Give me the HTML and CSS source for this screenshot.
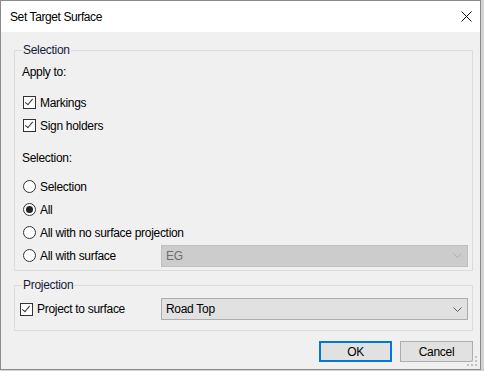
FILE: index.html
```html
<!DOCTYPE html>
<html>
<head>
    <link rel="stylesheet" href="styles.css">
</head>
<body>
    <div class="window">
        <div class="titlebar">
            <span class="title">Set Target Surface</span>
            <svg class="close-icon" width="11" height="11" viewBox="0 0 11 11">
                <path d="M0.5 0.5 L10.5 10.5 M10.5 0.5 L0.5 10.5" stroke="#111" stroke-width="1" fill="none"/>
            </svg>
        </div>
        <div class="content">
            <fieldset class="group">
                <legend>Selection</legend>
                <div class="text-line apply-label">Apply to:</div>
                <div class="check-row">
                    <span class="checkbox checked"></span>
                    <span>Markings</span>
                </div>
                <div class="check-row">
                    <span class="checkbox checked"></span>
                    <span>Sign holders</span>
                </div>
                <div class="text-line selection-label">Selection:</div>
                <div class="radio-row">
                    <div class="radio-label"><span class="radio"></span><span>Selection</span></div>
                </div>
                <div class="radio-row">
                    <div class="radio-label"><span class="radio selected"></span><span>All</span></div>
                </div>
                <div class="radio-row">
                    <div class="radio-label wide"><span class="radio"></span><span>All with no surface projection</span></div>
                </div>
                <div class="radio-row">
                    <div class="radio-label"><span class="radio"></span><span>All with surface</span></div>
                    <div class="combo disabled">
                        <span>EG</span>
                        <svg width="9" height="5" viewBox="0 0 9 5"><path d="M0.5 0.5 L4.5 4.5 L8.5 0.5" stroke="#b0b0b0" fill="none"/></svg>
                    </div>
                </div>
            </fieldset>
            <fieldset class="group projection">
                <legend>Projection</legend>
                <div class="project-row">
                    <div class="project-label">
                        <span class="checkbox checked"></span>
                        <span>Project to surface</span>
                    </div>
                    <div class="combo">
                        <span>Road Top</span>
                        <svg width="9" height="5" viewBox="0 0 9 5"><path d="M0.5 0.5 L4.5 4.5 L8.5 0.5" stroke="#606060" fill="none"/></svg>
                    </div>
                </div>
            </fieldset>
            <div class="buttons">
                <button class="btn default">OK</button>
                <button class="btn">Cancel</button>
            </div>
        </div>
        <svg class="grip" width="11" height="11" viewBox="0 0 11 11">
            <rect x="8" y="0" width="2" height="2" fill="#c2c2c2"/>
            <rect x="4" y="4" width="2" height="2" fill="#c2c2c2"/>
            <rect x="8" y="4" width="2" height="2" fill="#c2c2c2"/>
            <rect x="0" y="8" width="2" height="2" fill="#c2c2c2"/>
            <rect x="4" y="8" width="2" height="2" fill="#c2c2c2"/>
            <rect x="8" y="8" width="2" height="2" fill="#c2c2c2"/>
        </svg>
    </div>
</body>
</html>
```

FILE: styles.css
```css
body {
    margin: 0;
    background-color: #d4d4d4;
    font-family: "Liberation Sans", Arial, sans-serif;
    font-size: 12px;
    letter-spacing: -0.3px;
    color: #000;
}
.window {
    position: relative;
    width: 479px;
    height: 368px;
    border: 1px solid #8a8a8a;
    display: flex;
    flex-direction: column;
    background-color: #f0f0f0;
}
.titlebar {
    height: 31px;
    background-color: #fff;
    display: flex;
    align-items: center;
    justify-content: space-between;
    padding: 0 8px 0 9px;
}
.title {
    letter-spacing: -0.4px;
    padding-top: 1px;
}
.content {
    flex: 1;
    padding: 11px 7px 0 13px;
    display: flex;
    flex-direction: column;
}
.group {
    margin: 0;
    border: 1px solid #dcdcdc;
    padding: 0 4px 3px 8px;
    min-width: 0;
}
.group legend {
    padding: 0 1px;
    margin-left: -1px;
    line-height: 14px;
    color: #161a3a;
}
.text-line {
    line-height: 14px;
    margin-left: -1px;
}
.apply-label {
    margin-top: 8px;
    margin-bottom: 12px;
}
.selection-label {
    margin-top: 14px;
    margin-bottom: 10px;
}
.check-row {
    height: 23px;
    display: flex;
    align-items: center;
    gap: 4px;
}
.checkbox {
    width: 13px;
    height: 13px;
    box-sizing: border-box;
    border: 1px solid #333;
    background-color: #fff;
    position: relative;
    flex-shrink: 0;
}
.checkbox.checked::after {
    content: "";
    position: absolute;
    left: 3px;
    top: 0px;
    width: 3px;
    height: 7px;
    border-right: 1px solid #333;
    border-bottom: 1px solid #333;
    transform: rotate(40deg);
    transform-origin: center;
}
.radio-row {
    height: 23px;
    display: flex;
    align-items: center;
}
.radio-label {
    width: 138px;
    display: flex;
    align-items: center;
    gap: 4px;
    flex-shrink: 0;
    white-space: nowrap;
}
.radio {
    width: 13px;
    height: 13px;
    box-sizing: border-box;
    border: 1px solid #333;
    border-radius: 50%;
    background-color: #fff;
    display: flex;
    align-items: center;
    justify-content: center;
    flex-shrink: 0;
}
.radio.selected::after {
    content: "";
    width: 7px;
    height: 7px;
    border-radius: 50%;
    background-color: #222;
}
.combo {
    flex: 1;
    height: 22px;
    box-sizing: border-box;
    border: 1px solid #adadad;
    background-color: #e1e1e1;
    display: flex;
    align-items: center;
    justify-content: space-between;
    padding: 0 5px 0 4px;
}
.combo.disabled {
    background-color: #cccccc;
    border-color: #bfbfbf;
    color: #6d6d6d;
}
.projection {
    margin-top: 7px;
    padding-top: 6px;
    padding-bottom: 10px;
}
.project-row {
    display: flex;
    align-items: center;
    margin-left: -3px;
}
.project-label {
    width: 141px;
    display: flex;
    align-items: center;
    gap: 4px;
    flex-shrink: 0;
}
.buttons {
    display: flex;
    justify-content: flex-end;
    gap: 8px;
    margin-top: 10px;
}
.btn {
    width: 73px;
    height: 21px;
    box-sizing: border-box;
    border: 1px solid #adadad;
    background-color: #e1e1e1;
    font-family: "Liberation Sans", Arial, sans-serif;
    font-size: 12px;
    letter-spacing: -0.3px;
    color: #000;
    padding: 0;
}
.btn.default {
    border: 2px solid #0078d7;
}
.grip {
    position: absolute;
    right: 2px;
    bottom: 2px;
}
```
